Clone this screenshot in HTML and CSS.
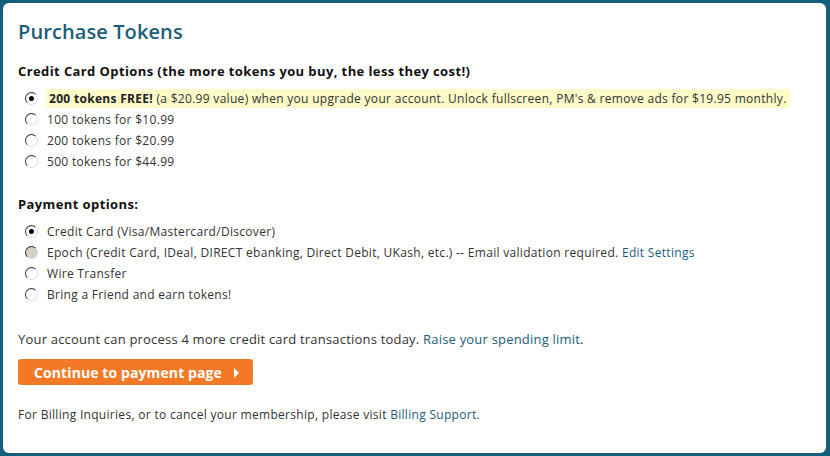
FILE: index.html
```html
<!DOCTYPE html>
<html lang="en">
<head>
  <meta charset="UTF-8">
  <title>Purchase Tokens</title>
  <link rel="stylesheet" href="styles.css">
</head>
<body>
  <div class="panel">
    <h1>Purchase Tokens</h1>

    <h2>Credit Card Options (the more tokens you buy, the less they cost!)</h2>
    <ul class="options">
      <li><span class="radio checked"></span><span class="promo"><b>200 tokens FREE!</b> (a $20.99 value) when you upgrade your account. Unlock fullscreen, PM's &amp; remove ads for $19.95 monthly.</span></li>
      <li><span class="radio"></span><span>100 tokens for $10.99</span></li>
      <li><span class="radio"></span><span>200 tokens for $20.99</span></li>
      <li><span class="radio"></span><span>500 tokens for $44.99</span></li>
    </ul>

    <h2 class="payment">Payment options:</h2>
    <ul class="options">
      <li><span class="radio checked"></span><span>Credit Card (Visa/Mastercard/Discover)</span></li>
      <li><span class="radio disabled"></span><span>Epoch (Credit Card, IDeal, DIRECT ebanking, Direct Debit, UKash, etc.) -- Email validation required. <a href="#">Edit Settings</a></span></li>
      <li><span class="radio"></span><span>Wire Transfer</span></li>
      <li><span class="radio"></span><span>Bring a Friend and earn tokens!</span></li>
    </ul>

    <p class="limit">Your account can process 4 more credit card transactions today. <a href="#">Raise your spending limit</a>.</p>

    <button class="continue">Continue to payment page <span class="arrow"></span></button>

    <p class="billing">For Billing Inquiries, or to cancel your membership, please visit <a href="#">Billing Support</a>.</p>
  </div>
</body>
</html>
```

FILE: styles.css
```css
body {
  margin: 0;
  background-color: #155f7b;
  font-family: "Open Sans", Arial, sans-serif;
  color: #333;
  font-size: 12px;
  letter-spacing: 0.3px;
}

.panel {
  margin: 3px 4px 3px 3px;
  height: 450px;
  box-sizing: border-box;
  background: white;
  border-radius: 6px;
  padding: 16px 15px 0 15px;
}

h1 {
  margin: 0 0 17px 0;
  font-size: 20px;
  font-weight: 600;
  color: #1b5d7c;
  line-height: 26px;
  letter-spacing: 0.1px;
}

h2 {
  margin: 0 0 8px 0;
  font-size: 13px;
  font-weight: bold;
  color: #111;
  line-height: 18px;
  letter-spacing: 0.4px;
}

h2.payment {
  margin-top: 23px;
}

.options {
  list-style: none;
  margin: 0;
  padding: 0;
}

.options li {
  display: flex;
  align-items: center;
  height: 21px;
  padding-left: 7px;
}

.radio {
  display: inline-block;
  width: 11px;
  height: 11px;
  border: 1px solid;
  border-color: #333 #ddd #ddd #333;
  border-radius: 50%;
  background: white;
  margin-right: 9px;
  position: relative;
  flex-shrink: 0;
}

.radio.checked::after {
  content: "";
  position: absolute;
  left: 3px;
  top: 3px;
  width: 5px;
  height: 5px;
  border-radius: 50%;
  background: #000;
}

.radio.disabled {
  background: #d4d0c8;
}

.promo {
  background: #fdfbc8;
  padding: 1px 3px;
  margin-left: -1px;
}

.promo b {
  color: #222;
}

a {
  color: #1b5d7c;
  text-decoration: none;
}

.limit {
  margin: 25px 0 11px 0;
  font-size: 13px;
  letter-spacing: 0.2px;
}

.continue {
  background: #f27a26;
  color: white;
  border: none;
  border-radius: 3px;
  font-family: inherit;
  font-size: 14px;
  font-weight: bold;
  letter-spacing: 0.1px;
  height: 26px;
  padding: 0 14px 0 16px;
  cursor: pointer;
}

.arrow {
  display: inline-block;
  width: 0;
  height: 0;
  border-left: 5px solid white;
  border-top: 5px solid transparent;
  border-bottom: 5px solid transparent;
  margin-left: 8px;
}

.billing {
  margin: 21px 0 0 0;
}
```
